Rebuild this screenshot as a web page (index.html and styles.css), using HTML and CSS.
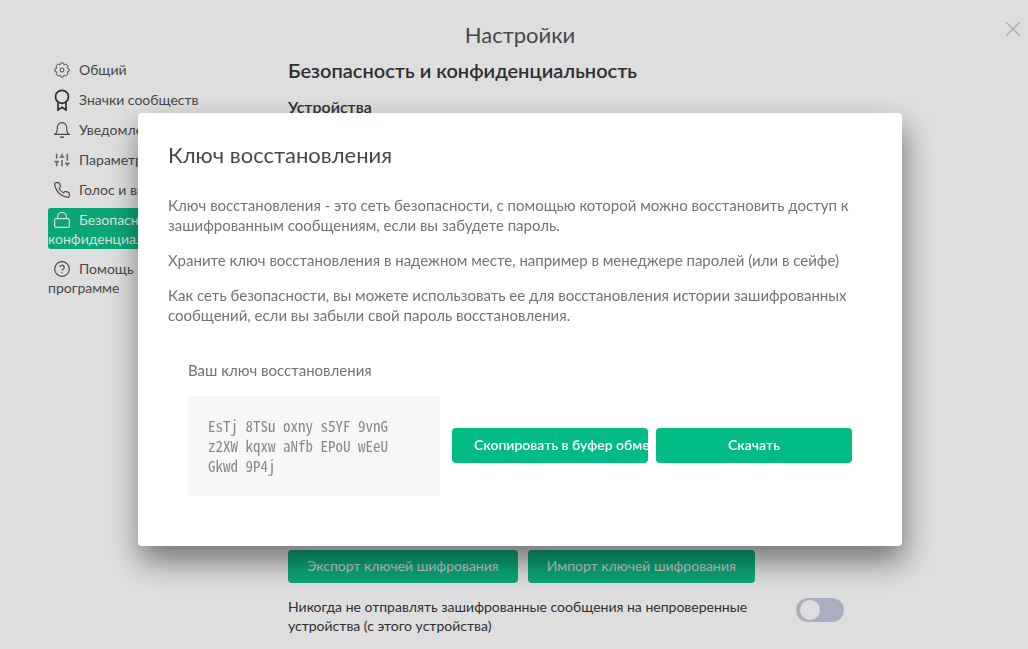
FILE: index.html
```html
<!DOCTYPE html>
<html lang="ru">
<head>
<meta charset="utf-8">
<meta name="viewport" content="width=device-width, initial-scale=1">
<title>Настройки</title>
<link rel="stylesheet" href="styles.css">
</head>
<body>
<div class="settings">
  <header class="settings-header">
    <h1 class="settings-title">Настройки</h1>
    <button class="close" type="button" aria-label="Закрыть">
      <svg width="16" height="16" viewBox="0 0 16 16" fill="none" stroke="currentColor" stroke-width="1.3"><path d="M1.2 1.2l13.6 13.6M14.8 1.2L1.2 14.8"/></svg>
    </button>
  </header>
  <div class="settings-body">
    <nav class="tabs">
      <a class="tab" href="#general"><svg class="tab-icon fine" viewBox="0 0 24 24"><circle cx="12" cy="12" r="3"/><path d="M19.4 8.900C24 8.500 24 15.500 19.400 15.100C22.900 18.100 18.100 22.900 15.100 19.400C15.500 24 8.500 24 8.900 19.400C5.900 22.900 1.100 18.100 4.600 15.100C0 15.500 0 8.500 4.600 8.900C1.100 5.900 5.900 1.100 8.900 4.600C8.500 0 15.500 0 15.100 4.600C18.100 1.100 22.900 5.900 19.400 8.900z"/></svg>Общий</a>
      <a class="tab" href="#flair"><svg class="tab-icon badge" viewBox="0 0 16 22"><circle cx="8" cy="7.800" r="6.500"/><path d="M4 13V21L8 18.300l4 2.700v-8"/></svg>Значки сообществ</a>
      <a class="tab" href="#notifications"><svg class="tab-icon" viewBox="0 0 24 24"><path d="M19 8a7 7 0 0 0-14 0c0 8.500-3.500 10.500-3.500 10.500h21s-3.500-2-3.500-10.500"/><path d="M14 22.500a2.300 2.300 0 0 1-4 0z"/></svg>Уведомления</a>
      <a class="tab" href="#preferences"><svg class="tab-icon sliders" viewBox="0 0 24 24"><path d="M4 21.500v-7M4 10V2.500M12 21.500V12M12 7.500V2.500M20 21.500v-4M20 13V2.500M.5 14.500h7M8.500 7.500h7M16.500 17h7"/></svg>Параметры</a>
      <a class="tab" href="#voice"><svg class="tab-icon" viewBox="0 0 24 24"><path d="M23 17.500v3.300a2.200 2.200 0 0 1-2.400 2.200 22 22 0 0 1-9.600-3.400 21.500 21.500 0 0 1-6.600-6.600A22 22 0 0 1 1 3.400 2.200 2.200 0 0 1 3.200 1h3.300a2.200 2.200 0 0 1 2.200 1.900c.14 1.050.4 2.100.77 3.100a2.200 2.200 0 0 1-.5 2.300L7.600 9.700a17.600 17.600 0 0 0 6.600 6.600l1.400-1.400a2.200 2.200 0 0 1 2.300-.5c1 .37 2.050.63 3.100.77a2.200 2.200 0 0 1 1.900 2.300z"/></svg>Голос и видео</a>
      <a class="tab tab-active" href="#security"><svg class="tab-icon" viewBox="0 0 24 24"><rect x="1" y="10" width="22" height="13" rx="2"/><path d="M5.500 10V7a6.500 6.500 0 0 1 13 0v3"/></svg>Безопасность и конфиденциальность</a>
      <a class="tab" href="#help"><svg class="tab-icon" viewBox="0 0 24 24"><circle cx="12" cy="12" r="11"/><path d="M8.800 9a3.300 3.300 0 0 1 6.500 1c0 2.200-3.300 2.800-3.300 4.300M12 17v1.500"/></svg>Помощь &amp; о программе</a>
    </nav>
    <main class="content">
      <h2 class="page-title">Безопасность и конфиденциальность</h2>
      <section class="devices"><h3 class="section-title">Устройства</h3></section>
      <div class="key-actions">
        <button class="button" type="button">Экспорт ключей шифрования</button>
        <button class="button" type="button">Импорт ключей шифрования</button>
      </div>
      <div class="setting">
        <label class="setting-label" for="verified-only">Никогда не отправлять зашифрованные сообщения на непроверенные устройства (с этого устройства)</label>
        <input class="toggle" id="verified-only" type="checkbox" role="switch">
      </div>
    </main>
  </div>
</div>
<div class="overlay">
  <section class="dialog" role="dialog" aria-modal="true" aria-labelledby="dialog-title">
    <h2 class="dialog-title" id="dialog-title">Ключ восстановления</h2>
    <p class="text">Ключ восстановления - это сеть безопасности, с помощью которой можно восстановить доступ к зашифрованным сообщениям, если вы забудете пароль.</p>
    <p class="text">Храните ключ восстановления в надежном месте, например в менеджере паролей (или в сейфе)</p>
    <p class="text">Как сеть безопасности, вы можете использовать ее для восстановления истории зашифрованных сообщений, если вы забыли свой пароль восстановления.</p>
    <div class="recovery">
      <div class="recovery-label">Ваш ключ восстановления</div>
      <div class="recovery-row">
        <code class="key">EsTj 8TSu oxny s5YF 9vnG z2XW kqxw aNfb EPoU wEeU Gkwd 9P4j</code>
        <div class="recovery-buttons">
          <button class="button button-primary" type="button">Скопировать в буфер обмена</button>
          <button class="button button-primary" type="button">Скачать</button>
        </div>
      </div>
    </div>
  </section>
</div>
</body>
</html>
```
FILE: styles.css
```css
* { box-sizing: border-box; }
body {
  margin: 0;
  min-height: 100vh;
  overflow: hidden;
  background: #dedede;
  color: #2e2f32;
  font: 14px/19px Lato, "Open Sans", sans-serif;
}
h1, h2, h3, p { margin: 0; }
button { font: inherit; border: 0; cursor: pointer; }

.settings-header {
  position: relative;
  padding: 20px 0 0 12px;
  text-align: center;
}
.settings-title { font-size: 22px; line-height: 30px; font-weight: 400; color: #45474a; }
.close {
  position: absolute;
  top: 21px;
  right: 7px;
  width: 16px;
  height: 16px;
  padding: 0;
  background: none;
  color: #a9a9a9;
}
.close svg { display: block; }

.settings-body { display: flex; padding: 8px 0 0 48px; }
.tabs { display: flex; flex-direction: column; gap: 8px; flex: 0 0 170px; }
.tab {
  min-height: 22px;
  padding: 2px 0 1px;
  border-radius: 3px;
  color: #45474a;
  text-decoration: none;
}
.tab-icon {
  width: 16px;
  height: 16px;
  margin: 0 9px 0 6px;
  vertical-align: -3px;
  fill: none;
  stroke: currentColor;
  stroke-width: 1.7;
}
.fine { stroke-width: 1.5; }
.sliders { stroke-width: 2.4; color: #66686a; }
.badge {
  height: 22px;
  margin-top: -3px;
  margin-bottom: -3px;
  stroke-width: 1.7;
  color: #2e2f32;
}
.tab-active { background: #0aa678; color: #dedede; }

.content { flex: 1; max-width: 626px; padding-left: 70px; }
.page-title { font-size: 20px; line-height: 24px; font-weight: 600; }
.devices { min-height: 456px; padding-top: 14px; }
.section-title { font-size: 16px; line-height: 22px; font-weight: 600; }
.key-actions { display: flex; gap: 10px; padding-top: 12px; }
.button {
  height: 33px;
  padding: 0 19px 2px;
  border-radius: 4px;
  background: #0aa678;
  color: #c9cccb;
  white-space: nowrap;
  overflow: hidden;
}
.setting { display: flex; justify-content: space-between; padding-top: 14px; }
.setting-label { max-width: 480px; }
.toggle {
  appearance: none;
  flex: none;
  width: 48px;
  height: 24px;
  margin: 1px 0 0;
  padding: 2px 4px;
  border-radius: 12px;
  background: #a9afbe;
}
.toggle::before {
  content: "";
  display: block;
  width: 20px;
  height: 20px;
  border-radius: 50%;
  background: #dedede;
}

.overlay {
  position: fixed;
  inset: 0;
  display: flex;
  align-items: center;
  justify-content: center;
  padding: 10px 0 0 12px;
}
.dialog {
  width: 764px;
  max-width: 90%;
  padding: 27px 30px 50px;
  border-radius: 4px;
  background: #fff;
  box-shadow: 2px 15px 30px 0 rgba(0, 0, 0, 0.48);
  color: #737373;
  font-size: 15px;
  line-height: 20px;
}
.dialog-title {
  margin-bottom: 25px;
  color: #45474a;
  font-size: 22px;
  line-height: 30px;
  font-weight: 400;
}
.text { margin-bottom: 15px; }
.recovery { padding: 20px 20px 0; }
.recovery-label { margin-bottom: 16px; }
.recovery-row { display: flex; align-items: center; gap: 12px; }
.key {
  width: 252px;
  padding: 20px;
  background: #f7f7f7;
  color: #888;
  font: 15px/20px "Noto Sans Mono CJK SC", "Liberation Mono", monospace;
}
.recovery-buttons { display: flex; gap: 8px; padding-bottom: 1px; }
.button-primary {
  width: 196px;
  height: 35px;
  padding: 0 22px 1px;
  background: #03bb85;
  color: #fff;
  font-size: 14px;
  font-weight: 600;
}
```
